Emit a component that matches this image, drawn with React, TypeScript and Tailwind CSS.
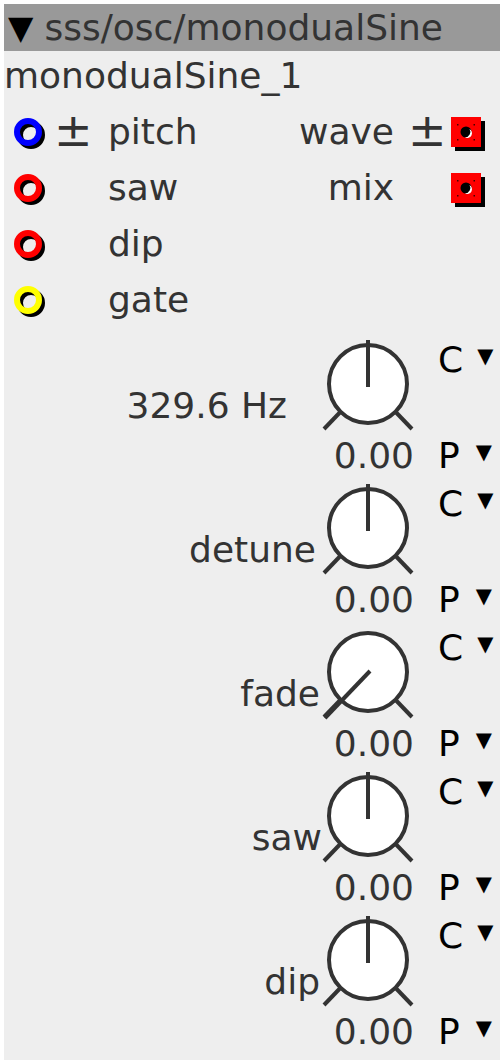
import React from "react";

const FONT = { fontFamily: '"DejaVu Sans", "Liberation Sans", sans-serif' };

function Ring({ color }: { color: string }) {
  return (
    <svg width="40" height="40" viewBox="0 0 40 40" className="shrink-0">
      <circle cx="19" cy="23" r="11" fill="none" stroke="#000" strokeWidth="6" />
      <circle cx="16" cy="20" r="11" fill="none" stroke={color} strokeWidth="6" />
    </svg>
  );
}

function SquareOut() {
  return (
    <svg width="38" height="38" viewBox="0 0 38 38" className="shrink-0">
      <rect x="5" y="8" width="30" height="30" fill="#000" />
      <rect x="1" y="4" width="30" height="30" fill="#ff0000" />
      <circle cx="16" cy="19" r="5.5" fill="#000" />
      <path d="M19.5 16 A5.5 5.5 0 0 1 15 24.4 A4 4 0 0 0 19.5 16 Z" fill="#fff" />
      <rect x="7" y="11" width="1.5" height="1.5" fill="#400" />
      <rect x="23.5" y="11" width="1.5" height="1.5" fill="#400" />
      <rect x="7" y="26" width="1.5" height="1.5" fill="#400" />
      <rect x="23.5" y="26" width="1.5" height="1.5" fill="#400" />
    </svg>
  );
}

function Knob({ min }: { min?: boolean }) {
  return (
    <svg width="96" height="104" viewBox="0 0 96 104" className="block shrink-0">
      <line x1="26" y1="76" x2="2" y2="101" stroke="#333" strokeWidth="4" />
      <line x1="66" y1="76" x2="90" y2="101" stroke="#333" strokeWidth="4" />
      <circle cx="46" cy="56" r="39" fill="#fff" stroke="#333" strokeWidth="4" />
      {min ? (
        <line x1="48" y1="55" x2="3" y2="102" stroke="#333" strokeWidth="4" />
      ) : (
        <line x1="46" y1="59" x2="46" y2="12" stroke="#333" strokeWidth="4" />
      )}
    </svg>
  );
}

function KnobSection({ label, pr, min }: { label: string; pr: string; min?: boolean }) {
  return (
    <div className="flex h-[144px] shrink-0">
      <div className={`flex-1 flex justify-end pt-[58px] ${pr}`}>
        <span className="leading-[40px] whitespace-nowrap text-[#333]">{label}</span>
      </div>
      <div className="w-[96px] flex flex-col">
        <Knob min={min} />
        <div className="shrink-0 mt-[4px] h-[40px] leading-[40px] text-right pr-[4px] text-[#333] whitespace-nowrap">0.00</div>
      </div>
      <div className="w-[82px] flex flex-col pl-[20px]">
        <div className="shrink-0 mt-[12px] h-[40px] leading-[40px] text-black whitespace-nowrap">
          C<span className="text-[21px] ml-[14px] relative top-[-9px]">▼</span>
        </div>
        <div className="shrink-0 mt-[56px] h-[40px] leading-[40px] text-black whitespace-nowrap">
          P<span className="text-[21px] ml-[16px] relative top-[-9px]">▼</span>
        </div>
      </div>
    </div>
  );
}

export default function App() {
  return (
    <div className="bg-white w-[504px] h-[1064px] p-[4px]" style={FONT}>
      <div className="w-[496px] h-[1056px] bg-[#eeeeee] text-[36px] overflow-hidden">
        <div className="h-[47px] bg-[#999999] flex items-center pl-[4px] leading-[47px] whitespace-nowrap">
          <span className="text-[33px] text-black">▼</span>
          <span className="ml-[11px] text-[#333]">sss/osc/monodualSine</span>
        </div>
        <div className="h-[53px] leading-[50px] text-[#333] pl-[0px]">monodualSine_1</div>

        <div className="flex h-[56px] items-center">
          <div className="ml-[8px]"><Ring color="#0000ff" /></div>
          <span className="ml-[2px] w-[54px] text-[#333] text-[46px] leading-[40px] relative top-[-2px]">±</span>
          <span className="text-[#333] leading-[40px]">pitch</span>
          <div className="flex-1" />
          <span className="text-[#333] leading-[40px]">wave</span>
          <span className="ml-[14px] w-[42px] text-[#333] text-[46px] leading-[40px] relative top-[-2px]">±</span>
          <SquareOut />
          <div className="w-[12px]" />
        </div>
        <div className="flex h-[56px] items-center">
          <div className="ml-[8px]"><Ring color="#ff0000" /></div>
          <span className="ml-[2px] w-[54px]" />
          <span className="text-[#333] leading-[40px]">saw</span>
          <div className="flex-1" />
          <span className="text-[#333] leading-[40px]">mix</span>
          <span className="ml-[14px] w-[42px]" />
          <SquareOut />
          <div className="w-[12px]" />
        </div>
        <div className="flex h-[56px] items-center">
          <div className="ml-[8px]"><Ring color="#ff0000" /></div>
          <span className="ml-[2px] w-[54px]" />
          <span className="text-[#333] leading-[40px]">dip</span>
        </div>
        <div className="flex h-[56px] items-center">
          <div className="ml-[8px]"><Ring color="#ffff00" /></div>
          <span className="ml-[2px] w-[54px]" />
          <span className="text-[#333] leading-[40px]">gate</span>
        </div>

        <KnobSection label="329.6 Hz" pr="pr-[35px]" />
        <KnobSection label="detune" pr="pr-[6px]" />
        <KnobSection label="fade" pr="pr-[2px]" min />
        <KnobSection label="saw" pr="pr-[0px]" />
        <KnobSection label="dip" pr="pr-[2px]" />
      </div>
    </div>
  );
}
